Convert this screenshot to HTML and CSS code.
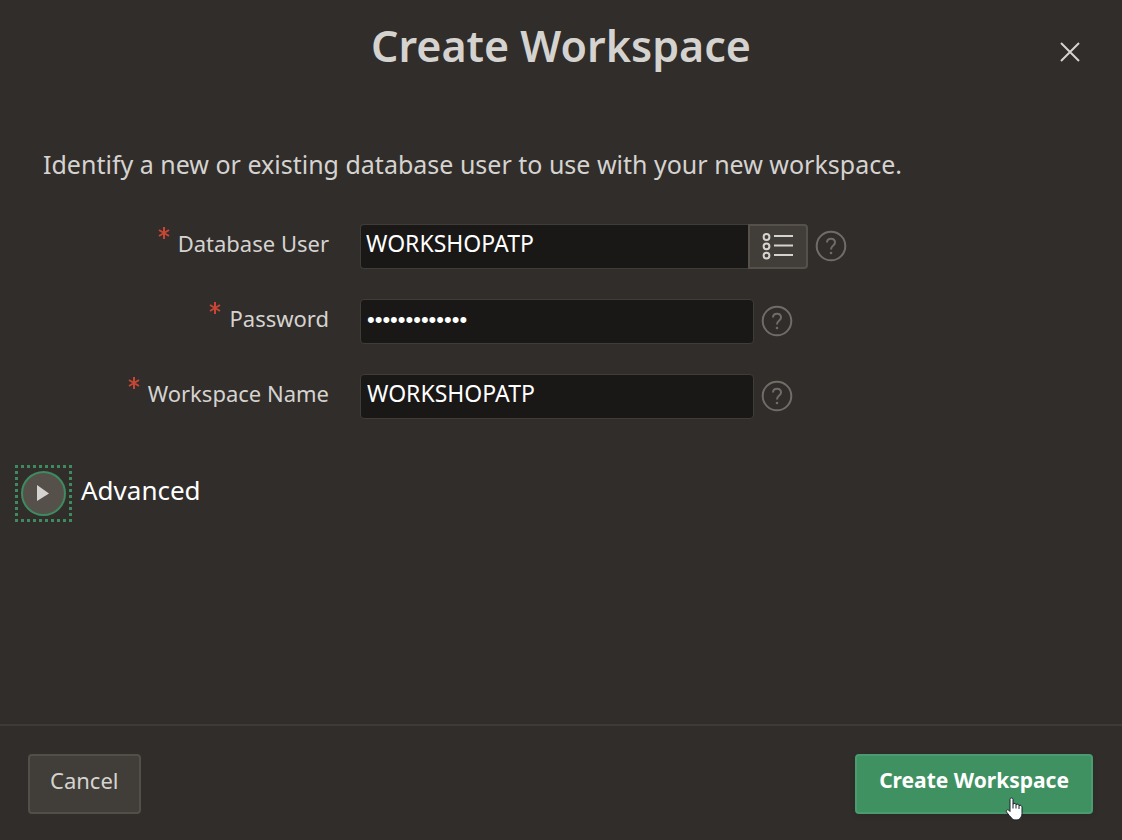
FILE: index.html
```html
<!DOCTYPE html>
<html lang="en">
<head>
<meta charset="utf-8">
<title>Create Workspace</title>
<link rel="stylesheet" href="styles.css">
</head>
<body>
<form class="dialog">
  <header class="header">
    <h1 class="title">Create Workspace</h1>
    <button class="close" type="button" aria-label="Close">
      <svg width="22" height="22" viewBox="0 0 22 22"><path d="M2 2 20 20M20 2 2 20"/></svg>
    </button>
  </header>
  <main class="content">
    <p class="intro">Identify a new or existing database user to use with your new workspace.</p>
    <div class="fields">
      <div class="row">
        <label class="label" for="user"><svg class="required" width="12" height="12" viewBox="0 0 12 12"><path d="M6 0V12M1 3 11 9M11 3 1 9"/></svg><span>Database User</span></label>
        <div class="control">
          <div class="group">
            <input class="field joined" id="user" type="text" value="WORKSHOPATP" required>
            <button class="list" type="button" aria-label="Choose user">
              <svg width="32" height="28" viewBox="0 0 32 28"><g><circle cx="4.500" cy="4" r="2.900"/><circle cx="4.500" cy="13.300" r="2.900"/><circle cx="4.500" cy="22.600" r="2.900"/></g><path d="M12 3H31M12 12.500H31M12 22H31"/></svg>
            </button>
          </div>
          <button class="help" type="button" aria-label="Help">
            <svg width="32" height="32" viewBox="0 0 32 32"><circle cx="16" cy="16" r="14.300"/><path d="M12 12.500C12 7.500 20 7.500 20 12.500C20 15.800 16 15.200 16 19.500"/><circle class="dot" cx="16" cy="23" r="1.300"/></svg>
          </button>
        </div>
      </div>
      <div class="row">
        <label class="label" for="password"><svg class="required" width="12" height="12" viewBox="0 0 12 12"><path d="M6 0V12M1 3 11 9M11 3 1 9"/></svg><span>Password</span></label>
        <div class="control">
          <input class="field secret" id="password" type="password" value="workshopatp21" required>
          <button class="help" type="button" aria-label="Help">
            <svg width="32" height="32" viewBox="0 0 32 32"><circle cx="16" cy="16" r="14.300"/><path d="M12 12.500C12 7.500 20 7.500 20 12.500C20 15.800 16 15.200 16 19.500"/><circle class="dot" cx="16" cy="23" r="1.300"/></svg>
          </button>
        </div>
      </div>
      <div class="row">
        <label class="label" for="workspace"><svg class="required" width="12" height="12" viewBox="0 0 12 12"><path d="M6 0V12M1 3 11 9M11 3 1 9"/></svg><span>Workspace Name</span></label>
        <div class="control">
          <input class="field" id="workspace" type="text" value="WORKSHOPATP" required>
          <button class="help" type="button" aria-label="Help">
            <svg width="32" height="32" viewBox="0 0 32 32"><circle cx="16" cy="16" r="14.300"/><path d="M12 12.500C12 7.500 20 7.500 20 12.500C20 15.800 16 15.200 16 19.500"/><circle class="dot" cx="16" cy="23" r="1.300"/></svg>
          </button>
        </div>
      </div>
    </div>
    <section class="advanced">
      <button class="toggle" type="button" aria-expanded="false" aria-labelledby="advanced">
        <svg width="57" height="57" viewBox="0 0 57 57"><path class="focus" d="M0 1.500H57M0 55.500H57M1.500 6V54M55.500 6V54"/><circle cx="28.500" cy="28.500" r="21.500"/><path class="arrow" d="M22 20 34 28.500 22 36Z"/></svg>
      </button>
      <h2 class="subtitle" id="advanced">Advanced</h2>
    </section>
  </main>
  <footer class="footer">
    <button class="button" type="button">Cancel</button>
    <button class="button primary" type="button">Create Workspace
      <svg class="pointer" width="18" height="24" viewBox="0 0 18 24"><path d="M5 2.500C5 .5 8 .5 8 2.500V7C9.500 6 11 6.500 11 7.500C12.500 6.700 14 7.300 14 8.500C15.500 7.800 17 8.700 17 10.200V16.500C17 19.500 15.500 20 15.500 21C14 23.500 8 23.500 7 21.500C5.500 19.500 3 17.500 1.500 15C.5 13 3 12 4 13.500L5 14.500Z"/><path d="M8 7V11.500M11 7.500V11.500M14 8.500V12"/></svg>
    </button>
  </footer>
</form>
</body>
</html>
```
FILE: styles.css
```css
* { box-sizing: border-box; }
body { margin: 0; background: #312d2a; color: #d5d3d0; font-family: "Noto Sans", sans-serif; font-size: 22px; }
svg { display: block; fill: none; stroke: currentColor; stroke-width: 2; }
button, input { font: inherit; color: inherit; }
.dialog { min-height: 100vh; display: flex; flex-direction: column; }
.header { display: grid; grid-template-columns: 1fr auto 1fr; align-items: center; padding: 14px 41px 0; }
.title { grid-column: 2; margin: 0; font-size: 43px; line-height: 64px; font-weight: 600; }
.close { justify-self: end; margin-top: 12px; padding: 0; border: 0; background: none; }
.content { flex: 1; padding: 66px 15px 0; }
.intro { margin: 0 0 40px 28px; font-size: 25px; line-height: 40px; }
.fields { display: grid; gap: 30px; }
.row { display: grid; grid-template-columns: 314px 1fr; column-gap: 31px; }
.label { display: flex; justify-content: flex-end; gap: 8px; line-height: 38px; white-space: nowrap; }
.required { color: #c74634; margin-top: 3px; }
.control { display: flex; align-items: flex-start; gap: 7px; }
.group { display: flex; }
.field { width: 394px; height: 45px; padding: 0 6px 8px; border: 1px solid #403c38; border-radius: 4px; background: #191816; color: #fff; outline: 0; font-size: 23px; }
.joined { width: 388px; padding-left: 5px; border-right: 0; border-radius: 4px 0 0 4px; }
.secret { padding-bottom: 4px; font-family: "Liberation Sans", sans-serif; font-size: 22px; }
.list { width: 60px; height: 45px; padding: 0 12px; border: 2px solid #55514a; border-radius: 0 4px 4px 0; background: #413d38; }
.help { margin-top: 6px; padding: 0; border: 0; background: none; color: #716c68; }
.dot { fill: currentColor; stroke: none; }
.advanced { display: flex; align-items: flex-start; gap: 9px; margin-top: 46px; }
.toggle { padding: 0; border: 0; background: none; color: #3d8b5f; }
.toggle circle { fill: #56504b; }
.focus { stroke-width: 3; stroke-dasharray: 3; }
.arrow { fill: #d5d3d0; stroke: none; }
.subtitle { margin: 5px 0 0; font-size: 26px; line-height: 40px; font-weight: 400; color: #fff; }
.footer { display: flex; justify-content: space-between; padding: 28px 29px 26px 28px; border-top: 2px solid #3e3a37; }
.button { position: relative; height: 60px; padding: 0 20px 8px; border: 2px solid #524e48; border-radius: 4px; background: #413d38; }
.primary { padding: 0 22px 8px; border-color: #4a9c70; background: #3f9162; color: #fff; font-size: 21px; font-weight: 700; box-shadow: 0 2px 4px #2623204d; }
.pointer { position: absolute; right: 68px; bottom: -9px; fill: #fff; stroke: #17202b; stroke-width: 1; }
```
